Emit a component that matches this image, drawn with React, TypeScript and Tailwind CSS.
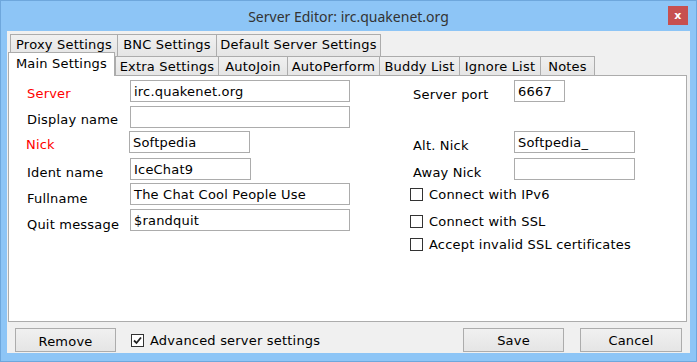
import React from "react";

const F = { fontFamily: '"DejaVu Sans", Verdana, sans-serif', letterSpacing: "0.2px" };

function Tab({ label, w, first }: { label: string; w: string; first?: boolean }) {
  return (
    <div
      className={`${w} ${first ? "" : "-ml-px"} h-full border border-b-0 border-[#acacac] bg-gradient-to-b from-[#f0f0f0] to-[#e5e5e5] flex items-center justify-center text-[13px] text-black leading-none pb-[2px]`}
    >
      {label}
    </div>
  );
}

function Tab2({ label, w, first }: { label: string; w: string; first?: boolean }) {
  return (
    <div
      className={`${w} ${first ? "" : "-ml-px"} h-full border border-b-0 border-[#acacac] bg-gradient-to-b from-[#f0f0f0] to-[#e5e5e5] flex items-center justify-center text-[13px] text-black leading-none pt-[1px]`}
    >
      {label}
    </div>
  );
}

function Box({ w, text }: { w: string; text?: string }) {
  return (
    <div className={`${w} h-[22px] border border-[#acacac] bg-white pl-[3px] pt-[1px] text-[13px] leading-[20px] text-black whitespace-nowrap`}>
      {text}
    </div>
  );
}

function Check({ label, checked }: { label: string; checked?: boolean }) {
  return (
    <div className="flex items-center h-[20px]">
      <div className="w-[13px] h-[13px] border border-[#333333] bg-white flex items-center justify-center">
        {checked && (
          <svg width="9" height="9" viewBox="0 0 9 9">
            <path d="M1 4.5 L3.5 7 L8 1.5" stroke="#222" strokeWidth="1.8" fill="none" />
          </svg>
        )}
      </div>
      <span className="ml-[6px] text-[13px] text-black leading-none">{label}</span>
    </div>
  );
}

export default function App() {
  return (
    <div className="w-[697px] h-[362px] bg-[#8dc5f6] border border-[#6ea7dc] flex flex-col" style={F}>
      {/* Title bar */}
      <div className="relative h-[30px] flex items-center justify-center">
        <span className="text-[14px] text-[#333333] mt-[1px] tracking-normal" style={{ fontFamily: '"Noto Sans", "Open Sans", sans-serif' }}>
          Server Editor: irc.quakenet.org
        </span>
        <div className="absolute left-[667px] top-[5px] w-[20px] h-[19px] bg-[#c75050] flex items-center justify-center">
          <span className="text-white text-[11px] font-bold leading-none -mt-[1px]" style={{ fontFamily: '"DejaVu Sans", sans-serif' }}>x</span>
        </div>
      </div>

      {/* Client area */}
      <div className="ml-[6px] w-[683px] h-[322px] bg-[#f0f0f0] flex flex-col">
        {/* Tab row 1 */}
        <div className="mt-[3px] h-[22px] pl-[3px] flex">
          <Tab label="Proxy Settings" w="w-[108px]" first />
          <Tab label="BNC Settings" w="w-[100px]" />
          <Tab label="Default Server Settings" w="w-[165px]" />
        </div>
        {/* Tab row 2 */}
        <div className="h-[19px] pl-[1px] flex items-end relative z-10">
          <div className="w-[107px] h-[24px] -mb-px border border-b-0 border-[#acacac] bg-white flex justify-center pt-[3px] text-[13px] text-black leading-[16px]">
            Main Settings
          </div>
          <Tab2 label="Extra Settings" w="w-[104px]" first />
          <Tab2 label="AutoJoin" w="w-[70px]" />
          <Tab2 label="AutoPerform" w="w-[93px]" />
          <Tab2 label="Buddy List" w="w-[81px]" />
          <Tab2 label="Ignore List" w="w-[82px]" />
          <Tab2 label="Notes" w="w-[55px]" />
        </div>

        {/* Panel */}
        <div className="ml-[1px] w-[679px] h-[247px] border border-[#acacac] bg-white flex text-[13px] text-black">
          {/* Left column */}
          <div className="pl-[18px] w-[342px] flex flex-col pt-[4px]">
            <div className="flex items-start">
              <div className="w-[103px] pt-[7px] text-[#ff0000] leading-none">Server</div>
              <Box w="w-[220px]" text="irc.quakenet.org" />
            </div>
            <div className="flex items-start mt-[4px]">
              <div className="w-[103px] pt-[7px] leading-none">Display name</div>
              <Box w="w-[220px]" />
            </div>
            <div className="flex items-start mt-[3px]">
              <div className="w-[103px] pt-[7px] -ml-px text-[#ff0000] leading-none">Nick</div>
              <Box w="w-[121px]" text="Softpedia" />
            </div>
            <div className="flex items-start mt-[5px]">
              <div className="w-[103px] pt-[8px] leading-none">Ident name</div>
              <Box w="w-[121px]" text="IceChat9" />
            </div>
            <div className="flex items-start mt-[3px]">
              <div className="w-[103px] pt-[9px] leading-none">Fullname</div>
              <Box w="w-[220px]" text="The Chat Cool People Use" />
            </div>
            <div className="flex items-start mt-[4px]">
              <div className="w-[103px] pt-[9px] leading-none">Quit message</div>
              <Box w="w-[220px]" text="$randquit" />
            </div>
          </div>

          {/* Right column */}
          <div className="ml-[59px] flex flex-col pt-[4px]">
            <div className="flex items-start">
              <div className="w-[104px] pl-[3px] pt-[8px] leading-none">Server port</div>
              <Box w="w-[51px]" text="6667" />
            </div>
            <div className="flex items-start mt-[29px]">
              <div className="w-[104px] pl-[3px] pt-[8px] leading-none">Alt. Nick</div>
              <Box w="w-[121px]" text="Softpedia_" />
            </div>
            <div className="flex items-start mt-[5px]">
              <div className="w-[104px] pl-[3px] pt-[8px] leading-none">Away Nick</div>
              <Box w="w-[121px]" />
            </div>
            <div className="mt-[4px]">
              <Check label="Connect with IPv6" />
            </div>
            <div className="mt-[7px]">
              <Check label="Connect with SSL" />
            </div>
            <div className="mt-[3px]">
              <Check label="Accept invalid SSL certificates" />
            </div>
          </div>
        </div>

        {/* Footer */}
        <div className="flex items-start pt-[6px] pl-[8px] pr-[8px]">
          <button className="w-[101px] h-[24px] border border-[#acacac] bg-gradient-to-b from-[#f0f0f0] to-[#e5e5e5] text-[13px] text-black leading-none pt-[3px]">
            Remove
          </button>
          <div className="ml-[15px] mt-[2px]">
            <Check label="Advanced server settings" checked />
          </div>
          <div className="flex-1" />
          <button className="w-[101px] h-[24px] border border-[#acacac] bg-gradient-to-b from-[#f0f0f0] to-[#e5e5e5] text-[13px] text-black leading-none">
            Save
          </button>
          <button className="ml-[16px] w-[102px] h-[24px] border border-[#acacac] bg-gradient-to-b from-[#f0f0f0] to-[#e5e5e5] text-[13px] text-black leading-none">
            Cancel
          </button>
        </div>
      </div>
    </div>
  );
}
